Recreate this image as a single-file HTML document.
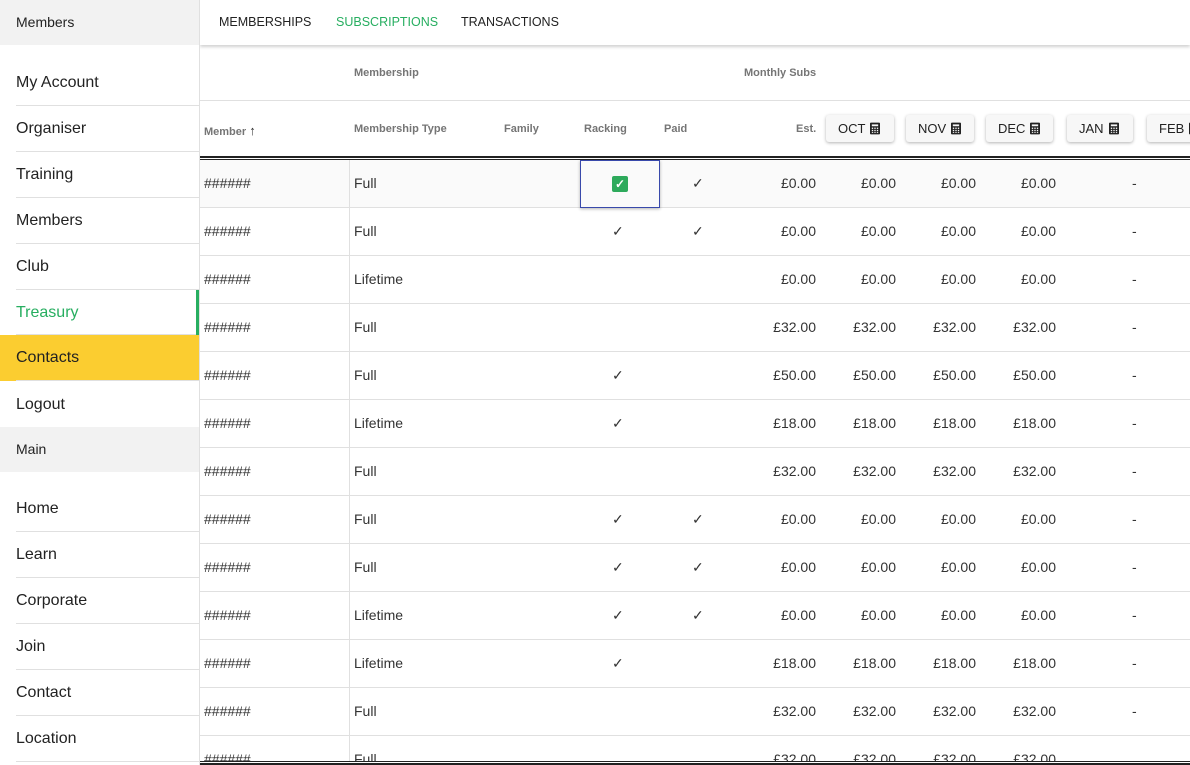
<!DOCTYPE html>
<html><head><meta charset="utf-8"><style>
*{box-sizing:border-box;margin:0;padding:0}
body{width:1190px;height:765px;overflow:hidden;font-family:"Liberation Sans",sans-serif;color:#222;background:#fff;position:relative}
.side{position:absolute;left:0;top:0;width:200px;height:765px;border-right:1px solid #e0e0e0;background:#fff}
.sh{height:45px;background:#f2f2f2;font-size:14px;line-height:45px;padding-left:16px;color:#222}
.si{position:absolute;left:0;width:199px;height:46px;font-size:16px;line-height:46px;padding-left:16px;color:#222}
.si:after{content:"";position:absolute;left:16px;right:0;bottom:0;height:1px;background:#e0e0e0}
.main{position:absolute;left:200px;top:0;width:990px;height:765px;overflow:hidden}
.tabs{height:45px;box-shadow:0 2px 3px rgba(0,0,0,.18);position:relative;z-index:2;background:#fff}
.tab{position:absolute;top:0;line-height:45px;font-size:12.5px;color:#222}
.h{position:absolute;font-size:11px;color:#757575;font-weight:bold}
.row{position:absolute;left:0;width:990px;height:48px;border-bottom:1px solid #e0e0e0;font-size:14px;color:#333}
.row span{position:absolute;top:0;line-height:47px}
.r{text-align:right;width:76px}
.btn{position:absolute;top:115px;height:27px;border-radius:3px;box-shadow:0 1px 3px rgba(0,0,0,.3);background:#f7f7f7;font-size:13px;line-height:27px;color:#222;padding-left:12px}
.btn svg{vertical-align:-2px;margin-left:5px}
</style></head><body>
<svg width="0" height="0" style="position:absolute"><defs><symbol id="c" viewBox="0 0 11 13"><rect x="0" y="0" width="11" height="13" rx="1" fill="#222"/><rect x="2" y="2" width="7" height="2" fill="#f7f7f7"/><g fill="#f7f7f7"><rect x="2" y="5.5" width="1.5" height="1.5"/><rect x="4.75" y="5.5" width="1.5" height="1.5"/><rect x="7.5" y="5.5" width="1.5" height="1.5"/><rect x="2" y="8" width="1.5" height="1.5"/><rect x="4.75" y="8" width="1.5" height="1.5"/><rect x="7.5" y="8" width="1.5" height="1.5"/><rect x="2" y="10.5" width="1.5" height="1"/><rect x="4.75" y="10.5" width="1.5" height="1"/><rect x="7.5" y="10.5" width="1.5" height="1"/></g></symbol></defs></svg>
<div class="side">
<div class="sh">Members</div>
<div class="si" style="top:60px">My Account</div>
<div class="si" style="top:106px">Organiser</div>
<div class="si" style="top:152px">Training</div>
<div class="si" style="top:198px">Members</div>
<div class="si" style="top:244px">Club</div>
<div class="si" style="top:290px;color:#27ae60;border-right:3px solid #27ae60;height:45px">Treasury</div>
<div class="si" style="top:335px;background:#fbcd30;height:46px">Contacts</div>
<div class="si" style="top:382px">Logout</div>
<div class="sh" style="position:absolute;top:427px;width:199px;height:45px;line-height:45px">Main</div>
<div class="si" style="top:486px">Home</div>
<div class="si" style="top:532px">Learn</div>
<div class="si" style="top:578px">Corporate</div>
<div class="si" style="top:624px">Join</div>
<div class="si" style="top:670px">Contact</div>
<div class="si" style="top:716px">Location</div>
</div>
<div class="main">
<div class="tabs">
<div class="tab" style="left:19px">MEMBERSHIPS</div>
<div class="tab" style="left:136px;color:#27ae60">SUBSCRIPTIONS</div>
<div class="tab" style="left:261px">TRANSACTIONS</div>
</div>
<div class="h" style="left:154px;top:67px">Membership</div>
<div class="h" style="left:544px;top:67px">Monthly Subs</div>
<div style="position:absolute;left:0;top:100px;width:990px;height:1px;background:#e0e0e0"></div>
<div class="h" style="left:4px;top:123px">Member <span style="font-size:13px;color:#333">&#8593;</span></div>
<div class="h" style="left:154px;top:123px">Membership Type</div>
<div class="h" style="left:304px;top:123px">Family</div>
<div class="h" style="left:384px;top:123px">Racking</div>
<div class="h" style="left:464px;top:123px">Paid</div>
<div class="h" style="left:596px;top:123px">Est.</div>
<div class="btn" style="left:626px;width:68px">OCT<svg width="10" height="13"><use href="#c"/></svg></div>
<div class="btn" style="left:706px;width:68px">NOV<svg width="10" height="13"><use href="#c"/></svg></div>
<div class="btn" style="left:786px;width:67px">DEC<svg width="10" height="13"><use href="#c"/></svg></div>
<div class="btn" style="left:867px;width:66px">JAN<svg width="10" height="13"><use href="#c"/></svg></div>
<div class="btn" style="left:947px;width:60px">FEB<svg width="10" height="13"><use href="#c"/></svg></div>
<div style="position:absolute;left:0;top:156px;width:990px;height:4px;border-top:2px solid #222;border-bottom:1px solid #222"></div>
<div class="row" style="top:160px;background:#fafafa"><span style="left:4px">######</span><span style="left:154px">Full</span><span style="left:380px;top:0;width:80px;height:48px;border:1px solid #3949ab;box-shadow:0 1px 3px rgba(0,0,0,.3);z-index:3"><i style="position:absolute;left:31px;top:15px;width:16px;height:16px;background:#2eaa5c;border-radius:2px;color:#fff;font-style:normal;font-size:12px;line-height:16px;text-align:center;font-weight:bold">&#10003;</i></span><span style="left:492px">&#10003;</span><span class="r" style="left:540px">£0.00</span><span class="r" style="left:620px">£0.00</span><span class="r" style="left:700px">£0.00</span><span class="r" style="left:780px">£0.00</span><span style="left:932px">-</span></div>
<div class="row" style="top:208px"><span style="left:4px">######</span><span style="left:154px">Full</span><span style="left:412px">&#10003;</span><span style="left:492px">&#10003;</span><span class="r" style="left:540px">£0.00</span><span class="r" style="left:620px">£0.00</span><span class="r" style="left:700px">£0.00</span><span class="r" style="left:780px">£0.00</span><span style="left:932px">-</span></div>
<div class="row" style="top:256px"><span style="left:4px">######</span><span style="left:154px">Lifetime</span><span class="r" style="left:540px">£0.00</span><span class="r" style="left:620px">£0.00</span><span class="r" style="left:700px">£0.00</span><span class="r" style="left:780px">£0.00</span><span style="left:932px">-</span></div>
<div class="row" style="top:304px"><span style="left:4px">######</span><span style="left:154px">Full</span><span class="r" style="left:540px">£32.00</span><span class="r" style="left:620px">£32.00</span><span class="r" style="left:700px">£32.00</span><span class="r" style="left:780px">£32.00</span><span style="left:932px">-</span></div>
<div class="row" style="top:352px"><span style="left:4px">######</span><span style="left:154px">Full</span><span style="left:412px">&#10003;</span><span class="r" style="left:540px">£50.00</span><span class="r" style="left:620px">£50.00</span><span class="r" style="left:700px">£50.00</span><span class="r" style="left:780px">£50.00</span><span style="left:932px">-</span></div>
<div class="row" style="top:400px"><span style="left:4px">######</span><span style="left:154px">Lifetime</span><span style="left:412px">&#10003;</span><span class="r" style="left:540px">£18.00</span><span class="r" style="left:620px">£18.00</span><span class="r" style="left:700px">£18.00</span><span class="r" style="left:780px">£18.00</span><span style="left:932px">-</span></div>
<div class="row" style="top:448px"><span style="left:4px">######</span><span style="left:154px">Full</span><span class="r" style="left:540px">£32.00</span><span class="r" style="left:620px">£32.00</span><span class="r" style="left:700px">£32.00</span><span class="r" style="left:780px">£32.00</span><span style="left:932px">-</span></div>
<div class="row" style="top:496px"><span style="left:4px">######</span><span style="left:154px">Full</span><span style="left:412px">&#10003;</span><span style="left:492px">&#10003;</span><span class="r" style="left:540px">£0.00</span><span class="r" style="left:620px">£0.00</span><span class="r" style="left:700px">£0.00</span><span class="r" style="left:780px">£0.00</span><span style="left:932px">-</span></div>
<div class="row" style="top:544px"><span style="left:4px">######</span><span style="left:154px">Full</span><span style="left:412px">&#10003;</span><span style="left:492px">&#10003;</span><span class="r" style="left:540px">£0.00</span><span class="r" style="left:620px">£0.00</span><span class="r" style="left:700px">£0.00</span><span class="r" style="left:780px">£0.00</span><span style="left:932px">-</span></div>
<div class="row" style="top:592px"><span style="left:4px">######</span><span style="left:154px">Lifetime</span><span style="left:412px">&#10003;</span><span style="left:492px">&#10003;</span><span class="r" style="left:540px">£0.00</span><span class="r" style="left:620px">£0.00</span><span class="r" style="left:700px">£0.00</span><span class="r" style="left:780px">£0.00</span><span style="left:932px">-</span></div>
<div class="row" style="top:640px"><span style="left:4px">######</span><span style="left:154px">Lifetime</span><span style="left:412px">&#10003;</span><span class="r" style="left:540px">£18.00</span><span class="r" style="left:620px">£18.00</span><span class="r" style="left:700px">£18.00</span><span class="r" style="left:780px">£18.00</span><span style="left:932px">-</span></div>
<div class="row" style="top:688px"><span style="left:4px">######</span><span style="left:154px">Full</span><span class="r" style="left:540px">£32.00</span><span class="r" style="left:620px">£32.00</span><span class="r" style="left:700px">£32.00</span><span class="r" style="left:780px">£32.00</span><span style="left:932px">-</span></div>
<div class="row" style="top:736px;height:25px;overflow:hidden;border:none"><span style="left:4px">######</span><span style="left:154px">Full</span><span class="r" style="left:540px">£32.00</span><span class="r" style="left:620px">£32.00</span><span class="r" style="left:700px">£32.00</span><span class="r" style="left:780px">£32.00</span></div>
<div style="position:absolute;left:149px;top:160px;width:1px;height:605px;background:#e0e0e0;z-index:2"></div>
<div style="position:absolute;left:0;top:761px;width:990px;height:4px;border-top:1px solid #222;border-bottom:2px solid #222;background:#fff;z-index:4"></div>
</div>
</body></html>
